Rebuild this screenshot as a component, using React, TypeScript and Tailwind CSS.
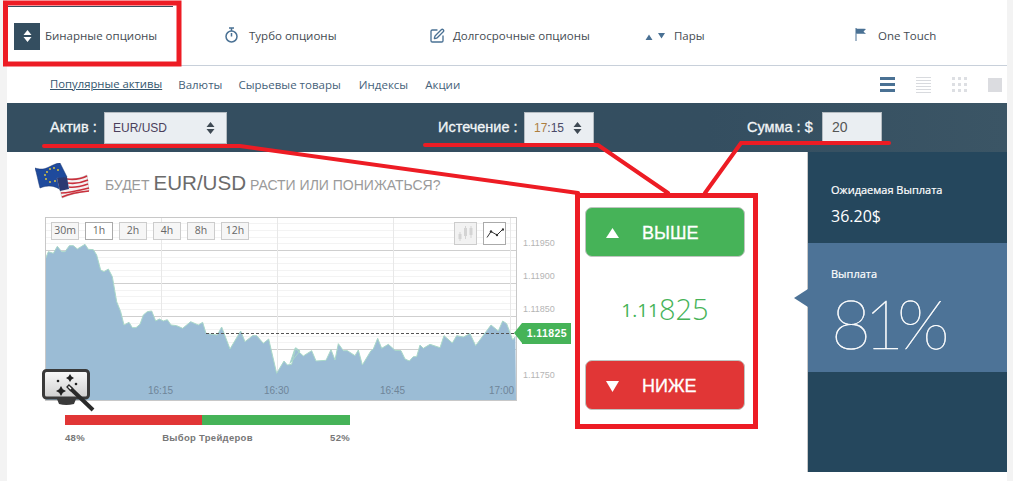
import { SquarePen } from 'lucide-react';

const sans = "font-['Open_Sans',sans-serif]";
const arial = "font-['Liberation_Sans',Arial,sans-serif]";

// точки графика снимаем в координатах страницы
const left = [[47,160],[55,140],[70,145],[82,124],[95,140],[105,140],[118,122],[130,122],[142,132],[165,118],[175,133],[190,134],[200,150],[212,195],[222,200],[235,192],[247,215],[260,290],[272,320],[282,360],[297,352],[307,368],[318,368],[330,358],[340,330],[352,320],[365,318],[377,348],[388,342],[400,348],[412,344],[423,360],[440,362],[458,370],[482,350],[505,360],[518,352],[528,385],[545,388],[562,390],[575,366],[600,432],[632,378],[645,410],[668,392],[680,392],[700,415],[716,402],[740,505],[762,468],[772,480],[785,478],[797,428],[810,438]].map(([x, y]) => [30 + x / 3 - 46, 205 + y / 3 - 218]);
const right = [[0,475],[15,430],[40,453],[65,437],[78,468],[108,466],[123,434],[135,465],[145,416],[160,437],[172,437],[195,452],[205,435],[217,480],[243,437],[250,432],[263,400],[275,430],[295,418],[315,436],[333,437],[345,462],[358,468],[370,455],[380,455],[390,420],[400,430],[420,418],[450,428],[462,392],[487,414],[500,392],[520,396],[540,386],[557,422],[603,360],[625,378],[638,348],[650,356],[668,405],[676,395]].map(([x, y]) => [290 + x / 3 - 46, 205 + y / 3 - 218]);
const line = [...left, ...right].map((p) => p.join(',')).join(' ');
const area = `0,182 ${line} 470,182`;

const major = [32, 65, 98, 131];
const minor = [5, 12, 19, 25, 39, 45, 52, 58, 72, 78, 85, 91, 105, 111, 118, 124];
const vertical = [115, 231, 347, 464];

function UpDown({ color = '#3f4a54' }: { color?: string }) {
  return (
    <svg width="9" height="12" viewBox="0 0 9 12">
      <path d="M4.500 0 8.500 5H.5zM4.500 12 .5 7h8z" fill={color} />
    </svg>
  );
}

function Flag() {
  return (
    <svg width="56" height="36" viewBox="0 0 56 36" className="shrink-0">
      <path d="M0 5C6 7 10 6 14 4S22 0 25 0L32 14 26 16 27 28C20 22 12 22 5 25 3 18 2 11 0 5Z" fill="#1f4a9c" stroke="#12306e" strokeWidth=".5" />
      <g fill="#e8cf3a">
        <circle cx="12" cy="9" r=".9" />
        <circle cx="15" cy="6" r=".9" />
        <circle cx="19" cy="5" r=".9" />
        <circle cx="23" cy="7" r=".9" />
        <circle cx="10" cy="12" r=".9" />
        <circle cx="11" cy="16" r=".9" />
        <circle cx="15" cy="19" r=".9" />
        <circle cx="20" cy="18" r=".9" />
      </g>
      <path d="M22 15C30 17 42 17 52 12L54 28C46 29 36 31 27 35Z" fill="#f5f2f2" stroke="#999" strokeWidth=".4" />
      <path d="M32 16C40 17 46 16 52 13M33 20C40 21 46 20 53 17M34 24C40 25 47 23 53 21M26 30C34 30 46 27 54 25M27 34C34 31 44 29 54 28" fill="none" stroke="#c9303c" strokeWidth="1.700" />
      <path d="M22 15 32 14 34 26 25 28Z" fill="#2c3a72" />
    </svg>
  );
}

function WandBadge() {
  return (
    <svg width="54" height="44" viewBox="0 0 54 44" className="absolute left-[-4px] top-[151px]">
      <defs>
        <linearGradient id="screen" x1="0" y1="0" x2="0" y2="1">
          <stop offset="0" stopColor="#fbfbfb" />
          <stop offset="1" stopColor="#cfcfcf" />
        </linearGradient>
      </defs>
      <path d="M15 30h19l-2 5q-8 2-15 0z" fill="#3a3a3a" />
      <rect x="1.500" y="1.500" width="45" height="27.500" rx="3" fill="url(#screen)" stroke="#3a3a3a" strokeWidth="3" />
      <g fill="#222">
        <path d="M28 5l1.500 2.500L32 9l-2.500 1.500L28 13l-1.500-2.500L24 9l2.500-1.500z" />
        <path d="M19 17l1.800 3.200L24 22l-3.200 1.800L19 27l-1.800-3.200L14 22l3.200-1.800z" />
        <circle cx="16" cy="12" r="1.300" />
        <circle cx="34" cy="15" r="1.300" />
      </g>
      <path d="M28 19 51 41" stroke="#2a2a2a" strokeWidth="4" />
      <path d="M25.500 16.500 30 21" stroke="#2a2a2a" strokeWidth="4" />
      <path d="M26.500 17.500 29 20" stroke="#fff" strokeWidth="1.500" />
    </svg>
  );
}

function Tab({ w, icon, label }: { w: string; icon: React.ReactNode; label: string }) {
  return (
    <div className={`${w} flex h-full items-center pt-[2px]`}>
      {icon}
      <span className="text-[11.5px] text-[#444b52]">{label}</span>
    </div>
  );
}

function TimeBtn({ label, active }: { label: string; active?: boolean }) {
  return (
    <div className={`flex h-[18px] w-[28px] items-center justify-center border text-[10.5px] text-[#666] ${active ? 'border-[#aaa] bg-white' : 'border-[#ccc] bg-[#f6f6f6]'}`}>
      {label}
    </div>
  );
}

export default function App() {
  return (
    <div className={`relative h-[481px] w-[1013px] overflow-hidden bg-[#f3f3f3] ${sans}`}>
      <div className="ml-[7px] h-[481px] w-[1000px] bg-white pt-[5px]">
        {/* верхнее меню */}
        <div className="flex h-[61px] items-stretch border-b border-[#c8d0da] pl-[7px]">
          <Tab
            w="w-[210px]"
            label="Бинарные опционы"
            icon={
              <div className="mr-[5px] flex h-[27px] w-[26px] items-center justify-center bg-[#344e60]">
                <UpDown color="#fff" />
              </div>
            }
          />
          <Tab
            w="w-[205px]"
            label="Турбо опционы"
            icon={
              <svg width="15" height="16" viewBox="0 0 15 16" className="mr-[10px] mt-[-2px] text-[#4a7194]">
                <circle cx="7.500" cy="9.500" r="5.500" fill="none" stroke="currentColor" strokeWidth="1.500" />
                <path d="M5 1h5M7.500 1v3M7.500 9.500V6" fill="none" stroke="currentColor" strokeWidth="1.500" />
              </svg>
            }
          />
          <Tab w="w-[216px]" label="Долгосрочные опционы" icon={<SquarePen size={16} strokeWidth={2} className="mr-[8px] text-[#4a7194]" />} />
          <Tab
            w="w-[210px]"
            label="Пары"
            icon={
              <svg width="21" height="9" viewBox="0 0 21 9" className="mr-[8px] text-[#4a7194]">
                <path d="M4 2.500 7.500 8H.5zM16.500 6.500 13 1h7z" fill="currentColor" />
              </svg>
            }
          />
          <Tab
            w="w-[140px]"
            label="One Touch"
            icon={
              <svg width="12" height="13" viewBox="0 0 12 13" className="mr-[11px] mt-[-3px]">
                <path d="M1 0v13" stroke="#4a7194" strokeWidth="1" />
                <path d="M1 .5c3 1 5-.5 10 .5L8.500 3.500 11 6C6 5 4 6.500 1 5.500z" fill="#4a7194" />
              </svg>
            }
          />
        </div>

        {/* категории */}
        <div className="flex h-[37px] items-center justify-between pl-[43px] pr-[5px]">
          <div className="flex gap-[16px] text-[11.5px] text-[#46627a]">
            <span className="text-[11.3px] text-[#34566e] underline">Популярные активы</span>
            <span>Валюты</span>
            <span>Сырьевые товары</span>
            <span className="ml-[2px]">Индексы</span>
            <span className="ml-[1px]">Акции</span>
          </div>
          <div className="flex items-center gap-[21px]">
            <div className="flex w-[15px] flex-col gap-[3px]">
              <div className="h-[3px] bg-[#4a7194]" />
              <div className="h-[3px] bg-[#4a7194]" />
              <div className="h-[3px] bg-[#4a7194]" />
            </div>
            <div className="flex w-[15px] flex-col gap-[2px]">
              <div className="h-px bg-[#d8dade]" />
              <div className="h-px bg-[#d8dade]" />
              <div className="h-px bg-[#d8dade]" />
              <div className="h-px bg-[#d8dade]" />
              <div className="h-px bg-[#d8dade]" />
              <div className="h-px bg-[#d8dade]" />
            </div>
            <div className="grid w-[15px] grid-cols-3 gap-[3px]">
              {[0, 1, 2, 3, 4, 5, 6, 7, 8].map((i) => (
                <div key={i} className="h-[3px] w-[3px] bg-[#dddfe3]" />
              ))}
            </div>
            <div className="h-[14px] w-[14px] bg-[#dbdce0]" />
          </div>
        </div>

        {/* панель параметров */}
        <div className={`flex h-[49px] items-center bg-gradient-to-r from-[#344e60] from-70% to-[#3b5565] pl-[43px] ${arial}`}>
          <div className="flex w-[388px] items-center">
            <span className="w-[54px] text-[14.5px] text-[#f2f5f7] [-webkit-text-stroke:0.3px_#f2f5f7]">Актив :</span>
            <div className="flex h-[32px] w-[123px] items-center justify-between border border-[#b5bcc2] bg-[#eaeef2] pl-[8px] pr-[11px] text-[12px] text-[#4b3f5c]">
              EUR/USD
              <UpDown />
            </div>
          </div>
          <div className="flex w-[309px] items-center">
            <span className="w-[86px] text-[14.5px] text-[#f2f5f7] [-webkit-text-stroke:0.3px_#f2f5f7]">Истечение :</span>
            <div className="flex h-[32px] w-[70px] items-center justify-between border border-[#b5bcc2] bg-[#eaeef2] pl-[9px] pr-[11px] text-[12px]">
              <span>
                <span className="text-[#ad7f3e]">17</span>
                <span className="text-[#4b4a68]">:15</span>
              </span>
              <UpDown />
            </div>
          </div>
          <div className="flex items-center">
            <span className="w-[75px] text-[14.5px] text-[#f2f5f7] [-webkit-text-stroke:0.3px_#f2f5f7]">Сумма : $</span>
            <div className="flex h-[32px] w-[60px] items-center border border-[#b5bcc2] bg-[#eaeef2] pl-[9px] text-[14px] text-[#555]">20</div>
          </div>
        </div>

        {/* основная часть */}
        <div className="flex h-[320px] items-stretch">
          <div className="w-[578px] pl-[28px]">
            <div className={`flex h-[65px] items-start pt-[11px] ${arial}`}>
              <Flag />
              <div className="ml-[14px] mt-[8px] text-[14px] leading-[24px] text-[#9a9a9a]">
                БУДЕТ <span className="text-[20.6px] text-[#6b6b6b]">EUR/USD</span> РАСТИ ИЛИ ПОНИЖАТЬСЯ?
              </div>
            </div>

            {/* график */}
            <div className="relative ml-[10px] h-[184px] w-[472px] border border-[#c8c8c8]">
              <svg width="470" height="182" viewBox="0 0 470 182" className="absolute left-0 top-0">
                {minor.map((y) => (
                  <line key={y} x1="0" x2="470" y1={y + 0.5} y2={y + 0.5} stroke="#f3f3f3" />
                ))}
                {major.map((y) => (
                  <line key={y} x1="0" x2="470" y1={y + 0.5} y2={y + 0.5} stroke="#cfcfcf" />
                ))}
                {vertical.map((x) => (
                  <line key={x} x1={x + 0.5} x2={x + 0.5} y1="0" y2="182" stroke="#e8e8e8" />
                ))}
                <polygon points={area} fill="#9bbcd5" />
                <polyline points={line} fill="none" stroke="#a9d8c8" strokeWidth="1" />
                <line x1="160" x2="470" y1="115.500" y2="115.500" stroke="#555" strokeDasharray="3 2" />
              </svg>

              <div className="absolute left-[5px] top-[4px] flex gap-[6px]">
                <TimeBtn label="30m" />
                <TimeBtn label="1h" active />
                <TimeBtn label="2h" />
                <TimeBtn label="4h" />
                <TimeBtn label="8h" />
                <TimeBtn label="12h" />
              </div>
              <div className="absolute right-[10px] top-[4px] flex gap-[6px]">
                <div className="flex h-[23px] w-[23px] items-center justify-center border border-[#ccc] bg-[#f2f2f2]">
                  <svg width="15" height="17" viewBox="0 0 15 17">
                    <path d="M2 7v9M7.500 1v13M13 1v12" stroke="#d4d4d4" />
                    <rect x="0.500" y="9" width="3" height="5" fill="#d4d4d4" />
                    <rect x="6" y="3" width="3" height="8" fill="#d4d4d4" />
                    <rect x="11.500" y="3" width="3" height="7" fill="#d4d4d4" />
                  </svg>
                </div>
                <div className="flex h-[23px] w-[23px] items-center justify-center border border-[#aaa] bg-white">
                  <svg width="18" height="11" viewBox="0 0 18 11">
                    <path d="M1 9.500 5 3.500l6 3.500 6-6" fill="none" stroke="#333" strokeWidth="1" />
                    <circle cx="5" cy="3.500" r="1.200" fill="#333" />
                    <circle cx="11" cy="7" r="1.200" fill="#333" />
                    <circle cx="17" cy="1.500" r="1.200" fill="#333" />
                  </svg>
                </div>
              </div>

              <span className={`absolute left-[102px] top-[165px] text-[10px] text-[#6f8599] ${arial}`}>16:15</span>
              <span className={`absolute left-[218px] top-[165px] text-[10px] text-[#6f8599] ${arial}`}>16:30</span>
              <span className={`absolute left-[334px] top-[165px] text-[10px] text-[#6f8599] ${arial}`}>16:45</span>
              <span className={`absolute left-[443px] top-[165px] text-[10px] text-[#6f8599] ${arial}`}>17:00</span>

              <span className={`absolute left-[477px] top-[19px] text-[9px] text-[#b5b5b5] ${arial}`}>1.11950</span>
              <span className={`absolute left-[477px] top-[52px] text-[9px] text-[#b5b5b5] ${arial}`}>1.11900</span>
              <span className={`absolute left-[477px] top-[85px] text-[9px] text-[#b5b5b5] ${arial}`}>1.11850</span>
              <span className={`absolute left-[477px] top-[151px] text-[9px] text-[#b5b5b5] ${arial}`}>1.11750</span>

              <div className={`absolute left-[476px] top-[105px] flex h-[21px] w-[49px] items-center justify-end bg-[#46b358] pr-[4px] text-[10.5px] font-bold tracking-[0.4px] text-white ${arial}`}>
                1.11825
              </div>
              <div className="absolute left-[468px] top-[105px] h-0 w-0 border-y-[10.5px] border-r-[8px] border-y-transparent border-r-[#46b358]" />
              <WandBadge />
            </div>

            {/* выбор трейдеров */}
            <div className={`ml-[30px] mt-[14px] w-[285px] ${arial}`}>
              <div className="flex h-[10px]">
                <div className="h-full w-[137px] bg-[#e13636]" />
                <div className="h-full flex-1 bg-[#46b358]" />
              </div>
              <div className="mt-[6px] flex justify-between text-[9.5px] font-bold tracking-[0.3px] text-[#777]">
                <span>48%</span>
                <span>Выбор Трейдеров</span>
                <span>52%</span>
              </div>
            </div>
          </div>

          {/* кнопки */}
          <div className={`w-[222px] pt-[55px] ${arial}`}>
            <div className="flex h-[50px] w-[160px] items-center rounded-[7px] border border-[#c0c4c0] bg-[#46b358] pl-[20px] pt-[2px] text-[18px] text-white [-webkit-text-stroke:0.3px_#fff]">
              <svg width="13" height="10" viewBox="0 0 13 10" className="mr-[23px]">
                <path d="M6.500 0 13 10H0z" fill="#fff" />
              </svg>
              ВЫШЕ
            </div>
            <div className={`flex h-[103px] w-[160px] items-center justify-center text-[#46b358] ${sans}`}>
              <span className="pt-[3px] text-[19px]">1.11</span>
              <span className="text-[29px] font-light">825</span>
            </div>
            <div className="flex h-[50px] w-[160px] items-center rounded-[7px] border border-[#c0c4c0] bg-[#e13636] pl-[20px] pt-[2px] text-[18px] text-white [-webkit-text-stroke:0.3px_#fff]">
              <svg width="13" height="11" viewBox="0 0 13 11" className="mr-[23px]">
                <path d="M6.500 11 0 0h13z" fill="#fff" />
              </svg>
              НИЖЕ
            </div>
          </div>

          {/* правая колонка */}
          <div className="flex w-[200px] flex-col border-l border-[#c8c8c8] bg-[#25475d] text-white">
            <div className="h-[91px] pl-[23px] pt-[30px]">
              <div className="text-[11px] leading-[16px] [-webkit-text-stroke:0.2px_#fff]">Ожидаемая Выплата</div>
              <div className="mt-[8px] text-[16px] leading-[20px]">36.20$</div>
            </div>
            <div className="relative h-[129px] bg-[#4d7397] pl-[23px] pt-[23px]">
              <div className="absolute left-[-14px] top-[46px] h-0 w-0 border-y-[9px] border-r-[14px] border-y-transparent border-r-[#4d7397]" />
              <div className="text-[11px] leading-[16px] [-webkit-text-stroke:0.2px_#fff]">Выплата</div>
              <div className="mt-[3px] font-['Lato',sans-serif] text-[69px] font-thin leading-[76px] tracking-[-7px] [-webkit-text-stroke:0.5px_#fff]">81%</div>
            </div>
          </div>
        </div>
      </div>

      {/* линия активной вкладки и красная разметка поверх скриншота */}
      <div className="absolute left-[7px] top-[6px] h-px w-[166px] bg-[#344e60]" />
      <svg width="1013" height="481" viewBox="0 0 1013 481" className="pointer-events-none absolute left-0 top-0">
        <g fill="none" stroke="#ed1c24" strokeWidth="4">
          <rect x="5.500" y="3" width="173.500" height="61" strokeWidth="5" />
          <rect x="577.500" y="195.500" width="178" height="231" strokeWidth="5" />
          <path d="M44 146H240L578 193" strokeLinecap="round" />
          <path d="M425 145H598L668 193" strokeLinecap="round" />
          <path d="M705 193 741 143H889" strokeLinecap="round" />
        </g>
      </svg>
    </div>
  );
}
